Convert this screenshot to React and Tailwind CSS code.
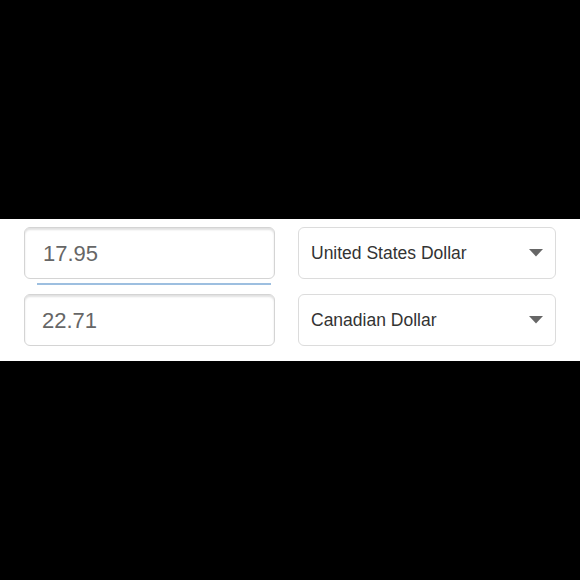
export default function App() {
  const font = { fontFamily: '"Liberation Sans", Arial, sans-serif' };
  return (
    <div className="w-[580px] h-[580px] bg-black flex flex-col" style={font}>
      <div className="h-[219px]" />
      <div className="h-[142px] bg-white pt-[8px] px-[24px] flex gap-[23px]">
        {/* amount inputs */}
        <div className="w-[251px] flex flex-col">
          <div className="h-[52px] rounded-[6px] border border-[#d4d4d4] shadow-[inset_0_2px_2px_rgba(0,0,0,0.12)] flex items-center pl-[18px] text-[22px] text-[#666]">
            17.95
          </div>
          <div className="h-[15px] pt-[4px] pl-[13px] pr-[4px]">
            <div className="h-[2px] bg-[#9dbfe0]" />
          </div>
          <div className="h-[52px] rounded-[6px] border border-[#d4d4d4] shadow-[inset_0_2px_2px_rgba(0,0,0,0.12)] flex items-center pl-[17px] text-[22px] text-[#666]">
            22.71
          </div>
        </div>
        {/* currency selects */}
        <div className="w-[258px] flex flex-col gap-[15px]">
          {['United States Dollar', 'Canadian Dollar'].map((c) => (
            <div
              key={c}
              className="h-[52px] rounded-[6px] border border-[#dcdcdc] flex items-center justify-between pl-[12px] pr-[12px] text-[17.5px] text-[#333]"
            >
              <span>{c}</span>
              <svg width="14" height="8" viewBox="0 0 14 8">
                <path d="M0 0h14L7 7.5z" fill="#666" />
              </svg>
            </div>
          ))}
        </div>
      </div>
    </div>
  );
}
